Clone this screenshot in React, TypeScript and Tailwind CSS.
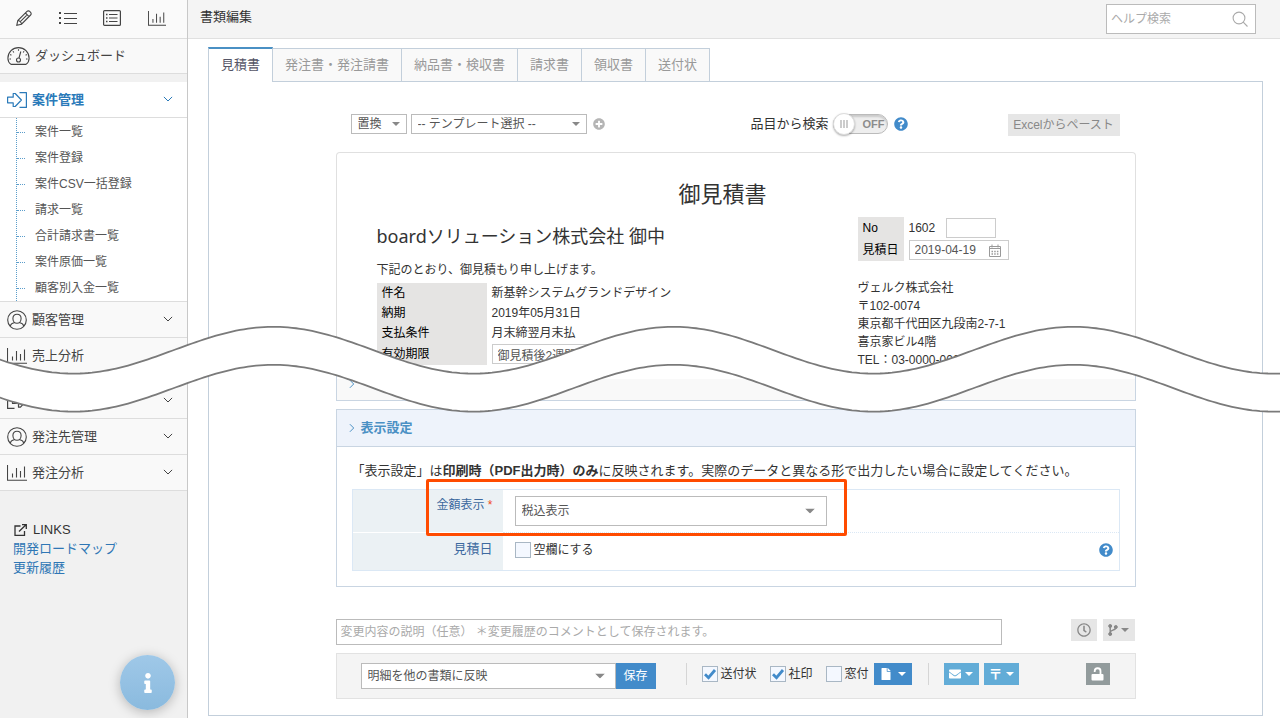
import { ReactNode, useState } from "react";
import { FaEnvelope, FaFile, FaInfo, FaPlusCircle, FaQuestionCircle, FaRegClock } from "react-icons/fa";

const SUB_MENU = ["案件一覧", "案件登録", "案件CSV一括登録", "請求一覧", "合計請求書一覧", "案件原価一覧", "顧客別入金一覧"];

const TABS = ["見積書", "発注書・発注請書", "納品書・検収書", "請求書", "領収書", "送付状"];

function PencilIcon() {
  return (
    <svg width="16" height="16" viewBox="0 0 16 16" fill="none" stroke="currentColor" strokeWidth="1.1">
      <path d="M.8 15.200l1-4.700L11 1.400a1.900 1.900 0 0 1 2.700 0l.9.9a1.900 1.900 0 0 1 0 2.700L5.500 14.200.8 15.200zM9.400 3l3.600 3.600M4.300 11.700l6.300-6.300M1.800 10.500c1.600 0 3.700 2 3.700 3.700" />
    </svg>
  );
}

function ListIcon() {
  return (
    <svg width="18" height="14" viewBox="0 0 18 14" stroke="currentColor" strokeWidth="1" fill="currentColor">
      <path d="M5 2.5h13M5 7.5h13M5 12.5h13" />
      <path d="M0 1h2v2H0zM0 6h2v2H0zM0 11h2v2H0z" stroke="none" />
    </svg>
  );
}

function BoxListIcon() {
  return (
    <svg width="18" height="16" viewBox="0 0 18 16" stroke="currentColor" strokeWidth="1.2" fill="none">
      <rect x="0.6" y="0.6" width="16.8" height="14.8" rx="1" />
      <path d="M6 4.5h8.5M6 8h8.5M6 11.5h8.5" />
      <path d="M3 4.5h1.5M3 8h1.5M3 11.5h1.5" strokeWidth="1.6" />
    </svg>
  );
}

function ChartIcon({ className }: { className: string }) {
  return (
    <svg className={className} viewBox="0 0 20 16" preserveAspectRatio="none" stroke="currentColor" strokeWidth="1.1" fill="none">
      <path d="M.5 0v15.3H20M5.5 8.5v4M9.500 3v9.500M13.500 6v6.500M17.500 1.500v11" />
    </svg>
  );
}

function GaugeIcon() {
  return (
    <svg width="23" height="18" viewBox="0 0 23 18" stroke="currentColor" strokeWidth="1.1" fill="none">
      <path d="M4 17.400C2 16 .9 13.700.9 11.200a10.600 10.600 0 0 1 21.200 0c0 2.500-1.100 4.800-3.100 6.200z" strokeLinejoin="round" />
      <circle cx="11.500" cy="13" r="2" />
      <path d="M12 11l1.800-6.500M11.500 2.200v1.500M6 4.300l.8 1.200M17 4.300l-.8 1.200M3.200 7.500l1.200.7M19.800 7.500l-1.200.7M2.500 12H4M19 12h1.500" />
    </svg>
  );
}

function EnterIcon() {
  return (
    <svg width="20" height="16" viewBox="0 0 20 16" stroke="currentColor" strokeWidth="1.2" fill="none">
      <path d="M.6 5.200h5.600V1.500h2L14.400 8l-6.200 6.500h-2v-3.700H.6zM12.500.6h6.900v14.800h-6.900" strokeLinejoin="round" />
    </svg>
  );
}

function LeaveIcon() {
  return (
    <svg width="20" height="16" viewBox="0 0 20 16" stroke="currentColor" strokeWidth="1.2" fill="none">
      <path d="M7.500.6H.6v14.800h6.900M5.500 5.500h6V1.800h2L19 8l-5.500 6.200h-2v-3.700h-6z" strokeLinejoin="round" />
    </svg>
  );
}

function UserIcon() {
  return (
    <svg width="20" height="20" viewBox="0 0 20 20" stroke="currentColor" strokeWidth="1.1" fill="none">
      <circle cx="10" cy="10" r="9.3" />
      <path d="M10 4.200c-2.600 0-4.100 1.900-4.100 4.300 0 2.500 1.700 4.800 4.100 4.800s4.100-2.300 4.100-4.800c0-2.400-1.500-4.300-4.100-4.300zM7.500 12.500c-2.300.7-3.800 1.300-4.300 3.600M12.500 12.500c2.300.7 3.800 1.300 4.300 3.600" />
    </svg>
  );
}

function Chevron() {
  return (
    <svg width="10" height="8" viewBox="0 0 10 8" fill="none" stroke="currentColor" strokeWidth="1">
      <path d="M.9.9L5 5 9.100.9" />
    </svg>
  );
}

function ChevronRight() {
  return (
    <svg width="6" height="10" viewBox="0 0 6 10" fill="none" stroke="#4a90c4" strokeWidth="1">
      <path d="M.9 1.200L4.700 5 .9 8.800" />
    </svg>
  );
}

function Caret({ className }: { className: string }) {
  return (
    <svg className={className} viewBox="0 0 10 5" fill="currentColor" preserveAspectRatio="none">
      <path d="M0 0h10L5 5z" />
    </svg>
  );
}

function UnlockIcon() {
  return (
    <svg width="13" height="14" viewBox="0 0 13 14" fill="none">
      <rect x="0.5" y="7" width="12" height="6.500" rx="1" fill="white" />
      <path d="M9.500 7.500V4.300a2.900 2.900 0 0 0-5.800-.3v1" stroke="white" strokeWidth="1.8" />
    </svg>
  );
}

function BranchIcon() {
  return (
    <svg width="10" height="12" viewBox="0 0 10 12" fill="currentColor" stroke="currentColor">
      <circle cx="2.200" cy="2" r="1.500" />
      <circle cx="2.200" cy="10" r="1.500" />
      <circle cx="7.800" cy="3" r="1.500" />
      <path d="M2.200 2v8M7.800 3.500c0 3.200-5.600 2-5.600 5" fill="none" strokeWidth="1.5" />
    </svg>
  );
}

function CalendarIcon() {
  return (
    <svg width="12" height="13" viewBox="0 0 12 13" className="shrink-0" fill="none" stroke="#999" strokeWidth="1">
      <path d="M.5 2.500h11v10H.5zM.5 4.500h11M3 .500v3M9 .500v3" />
      <path d="M2.500 7.500h7M2.500 10h7" strokeWidth="1.500" strokeDasharray="1.500 1.200" />
    </svg>
  );
}

function MenuRow({ icon, label, arrow = true, active = false }: { icon: ReactNode; label: string; arrow?: boolean; active?: boolean }) {
  return (
    <a
      href="#"
      className={
        active
          ? "flex h-9 items-center border-b border-[#ddd] bg-white pr-[14px] pl-[7px] font-bold text-[#2a7ab9]"
          : "flex h-9 items-center border-b border-[#ddd] bg-[#f9f9f9] pr-[14px] pl-[7px] text-[#444]"
      }
    >
      <span className="w-[25px]">{icon}</span>
      <span className="flex-1">{label}</span>
      {arrow && <Chevron />}
    </a>
  );
}

function Select({ label, options, className, caretClass }: { label: string; options: string[]; className: string; caretClass: string }) {
  return (
    <span className="relative block text-xs text-[#555]">
      <select aria-label={label} className={`appearance-none rounded-none border border-[#bbb] bg-white ${className}`}>
        {options.map((o) => (
          <option key={o}>{o}</option>
        ))}
      </select>
      <Caret className={`pointer-events-none absolute top-1/2 -translate-y-1/2 text-[#888] ${caretClass}`} />
    </span>
  );
}

function Check({ id, label, checked = false }: { id: string; label: string; checked?: boolean }) {
  return (
    <span className="flex items-center gap-[3px] text-xs">
      <span className="relative block h-4 w-4">
        <input id={id} type="checkbox" defaultChecked={checked} className="peer block h-4 w-4 appearance-none border border-[#a9b7c4] bg-[#f4f8ff]" />
        <svg className="pointer-events-none absolute inset-0 hidden peer-checked:block" width="16" height="16" viewBox="0 0 16 16" fill="none">
          <path d="M3 8.200l3.500 3.500L13 4" stroke="#428bca" strokeWidth="2.8" />
        </svg>
      </span>
      <label htmlFor={id}>{label}</label>
    </span>
  );
}

// torn-paper band that hides the middle of the page
function Wave() {
  const line = (base: number) => {
    const points: string[] = [];
    for (let x = -8; x <= 1288; x += 4) {
      points.push(`${x} ${(base + 23.4 * Math.cos(((x - 73.5) / 400) * 2 * Math.PI)).toFixed(2)}`);
    }
    return points;
  };
  const top = line(30.2);
  const bottom = line(68.2);
  return (
    <svg className="pointer-events-none absolute inset-x-0 top-[320px] h-[100px] w-full" viewBox="0 0 1280 100" preserveAspectRatio="none">
      <path d={`M${top.join("L")}L${[...bottom].reverse().join("L")}Z`} fill="white" />
      <path d={`M${top.join("L")}`} fill="none" stroke="#7a7a7a" strokeWidth="1.8" />
      <path d={`M${bottom.join("L")}`} fill="none" stroke="#7a7a7a" strokeWidth="1.8" />
    </svg>
  );
}

function Sidebar() {
  return (
    <aside className="w-[188px] shrink-0 border-r border-[#c8c8c8] bg-[#f1f1f1]">
      <div className="flex h-[39px] items-center justify-between border-b border-[#ddd] bg-[#fafafa] pr-[21px] pb-[2px] pl-4 text-[#444]">
        <button aria-label="編集"><PencilIcon /></button>
        <button aria-label="一覧"><ListIcon /></button>
        <button aria-label="明細"><BoxListIcon /></button>
        <button aria-label="分析"><ChartIcon className="h-[15px] w-[18px]" /></button>
      </div>
      <a href="#" className="mb-2 flex h-[35px] items-center gap-[5px] border-b border-[#ddd] bg-[#f9f9f9] pl-[7px] text-[#444]">
        <GaugeIcon />
        ダッシュボード
      </a>
      <MenuRow active icon={<EnterIcon />} label="案件管理" />
      <div className="border-b border-[#ddd] bg-white pl-4">
        <ul className="border-l border-dotted border-[#5b9dcb] pt-px text-xs text-[#555]">
          {SUB_MENU.map((item) => (
            <li key={item} className="flex h-[26px] items-center gap-[10px]">
              <span className="w-2 border-t border-dotted border-[#5b9dcb]" />
              <a href="#">{item}</a>
            </li>
          ))}
        </ul>
      </div>
      <MenuRow icon={<UserIcon />} label="顧客管理" />
      <MenuRow icon={<ChartIcon className="h-4 w-5" />} label="売上分析" arrow={false} />
      <div className="mt-[9px]">
        <MenuRow icon={<LeaveIcon />} label="発注管理" />
        <MenuRow icon={<UserIcon />} label="発注先管理" />
        <MenuRow icon={<ChartIcon className="h-4 w-5" />} label="発注分析" />
      </div>
      <div className="mt-[29px] pl-[13px] leading-[19px] text-[#2f77b5]">
        <p className="flex items-center gap-[6px] pl-px text-[#333]">
          <svg width="13" height="12" viewBox="0 0 13 12" fill="none" stroke="currentColor" strokeWidth="1.3">
            <path d="M6.500 2H1v9.300h9.500V7M5 7.500L12 .8M8 .7h4.300V5" />
          </svg>
          LINKS
        </p>
        <a href="#" className="block">開発ロードマップ</a>
        <a href="#" className="block">更新履歴</a>
      </div>
    </aside>
  );
}

function Toolbar() {
  const [on, setOn] = useState(false);
  return (
    <div className="flex h-[22px] items-start pr-4 pl-[15px]">
      <Select label="挿入方法" options={["置換", "追加"]} className="h-5 w-14 pl-[6px]" caretClass="right-[7px] h-1 w-2" />
      <span className="w-1" />
      <Select label="テンプレート" options={["-- テンプレート選択 --"]} className="h-5 w-44 pl-[6px]" caretClass="right-[7px] h-1 w-2" />
      <button aria-label="テンプレート追加" className="ml-[6px] flex h-5 items-center text-[#b5b5b5]">
        <FaPlusCircle size={12} />
      </button>
      <div className="mr-[100px] ml-auto flex h-5 items-center">
        <label htmlFor="item-search" className="mr-1">品目から検索</label>
        <span className="relative flex h-5 w-[55px] items-center justify-end rounded-full border border-[#bbb] bg-[#eee] pr-[2px] shadow-[inset_0_2px_2px_rgba(0,0,0,0.15)]">
          <input id="item-search" type="checkbox" role="switch" checked={on} onChange={() => setOn(!on)} className="absolute inset-0 z-10 cursor-pointer appearance-none" />
          <span className="absolute -left-px flex h-[22px] w-[22px] items-center justify-center gap-px rounded-full border border-[#ddd] bg-white shadow-[0_1px_2px_rgba(0,0,0,0.3)]">
            <span className="h-2 w-[2px] bg-[#ccc]" />
            <span className="h-2 w-[2px] bg-[#ccc]" />
            <span className="h-2 w-[2px] bg-[#ccc]" />
          </span>
          <span className="text-[11px] font-bold text-[#8c8c8c]">{on ? "ON" : "OFF"}</span>
        </span>
        <FaQuestionCircle size={14} className="ml-[6px] text-[#428bca]" />
      </div>
      <button className="h-[22px] w-28 bg-[#e6e6e6] text-xs text-[#888]">Excelからペースト</button>
    </div>
  );
}

function Estimate() {
  return (
    <section className="mt-4 h-[214px] rounded-t border border-b-0 border-[#e0e0e0] px-10 pt-[26px]">
      <h1 className="pr-[26px] text-center text-[22px] leading-8">御見積書</h1>
      <div className="mt-[6px] flex text-xs">
        <div className="flex-1">
          <h2 className="font-['Noto_Sans','Noto_Sans_CJK_JP',sans-serif] text-lg leading-[38px]">boardソリューション株式会社 御中</h2>
          <p className="pt-[2px] leading-[26px]">下記のとおり、御見積もり申し上げます。</p>
          <table className="text-left">
            <tbody>
              <tr className="h-5">
                <th className="w-[110px] bg-[#e5e4e3] px-[5px] font-normal text-black">件名</th>
                <td className="pl-[5px]">新基幹システムグランドデザイン</td>
              </tr>
              <tr className="h-5">
                <th className="bg-[#e5e4e3] px-[5px] font-normal text-black">納期</th>
                <td className="pl-[5px]">2019年05月31日</td>
              </tr>
              <tr className="h-5">
                <th className="bg-[#e5e4e3] px-[5px] font-normal text-black">支払条件</th>
                <td className="pl-[5px]">月末締翌月末払</td>
              </tr>
              <tr className="h-[22px]">
                <th className="bg-[#e5e4e3] px-[5px] font-normal text-black">有効期限</th>
                <td className="pl-[5px]">
                  <input aria-label="有効期限" defaultValue="御見積後2週間" className="block h-5 w-[150px] border border-[#ccc] bg-white px-[5px] text-[#555]" />
                </td>
              </tr>
            </tbody>
          </table>
        </div>
        <div className="w-[237px]">
          <table className="text-left">
            <tbody>
              <tr className="h-[22px]">
                <th className="w-[46px] bg-[#e5e4e3] pl-[5px] font-normal text-black">No</th>
                <td className="pl-[5px]">
                  <span className="flex items-center gap-[11px]">
                    1602
                    <input aria-label="枝番" className="h-5 w-[50px] border border-[#ccc] bg-white" />
                  </span>
                </td>
              </tr>
              <tr className="h-[22px]">
                <th className="bg-[#e5e4e3] pl-[5px] font-normal text-black">見積日</th>
                <td className="pl-[5px]">
                  <span className="flex h-5 w-[100px] items-center border border-[#ccc] bg-white pr-[7px] pl-[5px]">
                    <input aria-label="見積日" defaultValue="2019-04-19" className="w-full min-w-0 text-[#555]" />
                    <CalendarIcon />
                  </span>
                </td>
              </tr>
            </tbody>
          </table>
          <address className="mt-[18px] leading-[18px] not-italic">
            ヴェルク株式会社<br />
            〒102-0074<br />
            東京都千代田区九段南2-7-1<br />
            喜京家ビル4階<br />
            TEL：03-0000-0000
          </address>
        </div>
      </div>
    </section>
  );
}

function DisplaySettings() {
  return (
    <section className="mt-2 border border-[#c9d5e2]">
      <h3 className="flex h-[37px] items-center gap-[6px] border-b border-[#c9d5e2] bg-[#eef3fb] pl-3 font-bold text-[#4a90c4]">
        <ChevronRight />
        表示設定
      </h3>
      <div className="px-[15px] pt-[14px] pb-[15px]">
        <p className="leading-5">
          「表示設定」は<b>印刷時（PDF出力時）のみ</b>に反映されます。実際のデータと異なる形で出力したい場合に設定してください。
        </p>
        <div className="relative mt-2 border border-[#dbe8f5]">
          <div className="flex h-[43px]">
            <div className="w-[150px] border-b border-white bg-[#ebf1f4] pt-[7px] pr-[10px] text-right text-xs text-[#3d6a9f]">
              金額表示 <span className="text-[#f04a1c]">*</span>
            </div>
            <div className="flex-1 border-b border-dotted border-[#dbe8f5] pt-[6px] pl-3">
              <Select label="金額表示" options={["税込表示", "税抜表示"]} className="h-[30px] w-[312px] pl-[6px]" caretClass="left-[290px] h-[5px] w-[10px]" />
            </div>
          </div>
          <div className="flex h-[37px]">
            <div className="w-[150px] bg-[#ebf1f4] pt-[7px] pr-[10px] text-right text-[#3d6a9f]">見積日</div>
            <div className="flex flex-1 items-center justify-between pr-[6px] pb-1 pl-3">
              <Check id="blank-date" label="空欄にする" />
              <FaQuestionCircle size={14} className="text-[#428bca]" />
            </div>
          </div>
          {/* callout around the amount row */}
          <div className="pointer-events-none absolute -top-[11px] left-[73px] h-[57px] w-[421px] rounded-xs border-3 border-[#ff4b00]" />
        </div>
      </div>
    </section>
  );
}

function Footer() {
  return (
    <>
      <div className="mt-8 flex items-start gap-[6px]">
        <input aria-label="変更内容の説明" placeholder="変更内容の説明（任意） ＊変更履歴のコメントとして保存されます。" className="mr-[63px] h-[26px] flex-1 border border-[#bbb] px-1 text-xs placeholder:text-[#aaa]" />
        <button aria-label="履歴" className="flex h-[22px] w-[26px] items-center justify-center bg-[#e6e6e6] text-[#888]">
          <FaRegClock size={14} />
        </button>
        <button aria-label="分岐" className="mr-px flex h-[22px] w-8 items-center justify-center gap-[3px] bg-[#e6e6e6] text-[#888]">
          <BranchIcon />
          <Caret className="h-1 w-2" />
        </button>
      </div>
      <div className="mt-2 flex h-[46px] items-start border border-[#e2e2e2] bg-[#f4f4f4] pr-[25px] pl-6 pt-[9px]">
        <Select label="反映先" options={["明細を他の書類に反映"]} className="h-[26px] w-[255px] pl-[6px]" caretClass="right-[11px] h-[5px] w-[10px]" />
        <button className="h-[26px] w-10 bg-[#428bca] text-xs text-white">保存</button>
        <span className="mr-[15px] ml-[30px] h-[22px] border-l border-[#d5d5d5]" />
        <div className="flex h-[22px] items-center gap-[13px]">
          <Check id="cover-letter" label="送付状" checked />
          <Check id="seal" label="社印" checked />
          <Check id="window" label="窓付" />
        </div>
        <button aria-label="PDF" className="ml-[5px] flex h-[22px] w-[38px] items-center justify-center gap-[6px] bg-[#428bca] text-white">
          <FaFile size={12} />
          <Caret className="h-1 w-2" />
        </button>
        <span className="mr-[15px] ml-4 h-[22px] border-l border-[#d5d5d5]" />
        <button aria-label="メール" className="flex h-[22px] w-[35px] items-center justify-center gap-1 bg-[#62acd7] text-white">
          <FaEnvelope size={12} />
          <Caret className="h-1 w-2" />
        </button>
        <button aria-label="郵送" className="ml-[5px] flex h-[22px] w-[35px] items-center justify-center gap-[3px] bg-[#62acd7] text-sm font-bold text-white">
          〒
          <Caret className="h-1 w-2" />
        </button>
        <button aria-label="ロック" className="ml-auto flex h-[22px] w-6 items-center justify-center bg-[#929b9c]">
          <UnlockIcon />
        </button>
      </div>
    </>
  );
}

export default function App() {
  return (
    <div className="relative flex min-h-screen overflow-hidden bg-white font-['Liberation_Sans','Noto_Sans_CJK_JP',sans-serif] text-[13px] leading-[18px] text-[#333]">
      <Sidebar />
      <main className="min-w-0 flex-1">
        <header className="flex h-[39px] items-center justify-between border-b border-[#e0e0e0] bg-[#f4f4f4] pr-6 pl-3">
          <span className="pb-1">書類編集</span>
          <div className="flex h-[30px] w-[150px] items-center border border-[#bbb] bg-white pr-[7px] pl-1">
            <input aria-label="ヘルプ検索" placeholder="ヘルプ検索" className="w-full min-w-0 text-xs placeholder:text-[#aaa]" />
            <svg width="16" height="16" viewBox="0 0 16 16" className="shrink-0" fill="none" stroke="#aaa" strokeWidth="1.1">
              <circle cx="7" cy="7" r="5.900" />
              <path d="M11.200 11.200l4.300 4.300" />
            </svg>
          </div>
        </header>
        <div className="mt-2 mr-[17px] mb-[2px] ml-5">
          <nav className="relative z-10 -mb-px flex items-end text-[#999]">
            {TABS.map((tab, i) =>
              i === 0 ? (
                <a key={tab} href="#" className="h-[35px] border-x border-t-2 border-x-[#c3cfdb] border-t-[#4a90c4] bg-white px-3 pt-[7px] text-[#556]">{tab}</a>
              ) : (
                <a key={tab} href="#" className="h-[34px] border-y border-r border-[#c3cfdb] bg-[#f9f9f9] px-3 pt-[7px]">{tab}</a>
              )
            )}
          </nav>
          <div className="border border-[#c3cfdb] pt-8 pb-4">
            <div className="mx-auto w-[800px]">
              <Toolbar />
              <Estimate />
              <section className="border border-t-0 border-[#c9d5e2] pt-[13px]">
                <h3 className="h-[21px] bg-[#f9f9f9] pl-3">
                  <ChevronRight />
                </h3>
              </section>
              <DisplaySettings />
              <Footer />
            </div>
          </div>
        </div>
      </main>
      <Wave />
      <button aria-label="お知らせ" className="fixed bottom-2 left-[120px] flex h-[55px] w-[55px] items-center justify-center rounded-full bg-linear-to-b from-[#9fc8e8] to-[#8abade] text-white shadow-[0_2px_12px_rgba(0,0,0,0.25)]">
        <FaInfo size={20} />
      </button>
    </div>
  );
}
